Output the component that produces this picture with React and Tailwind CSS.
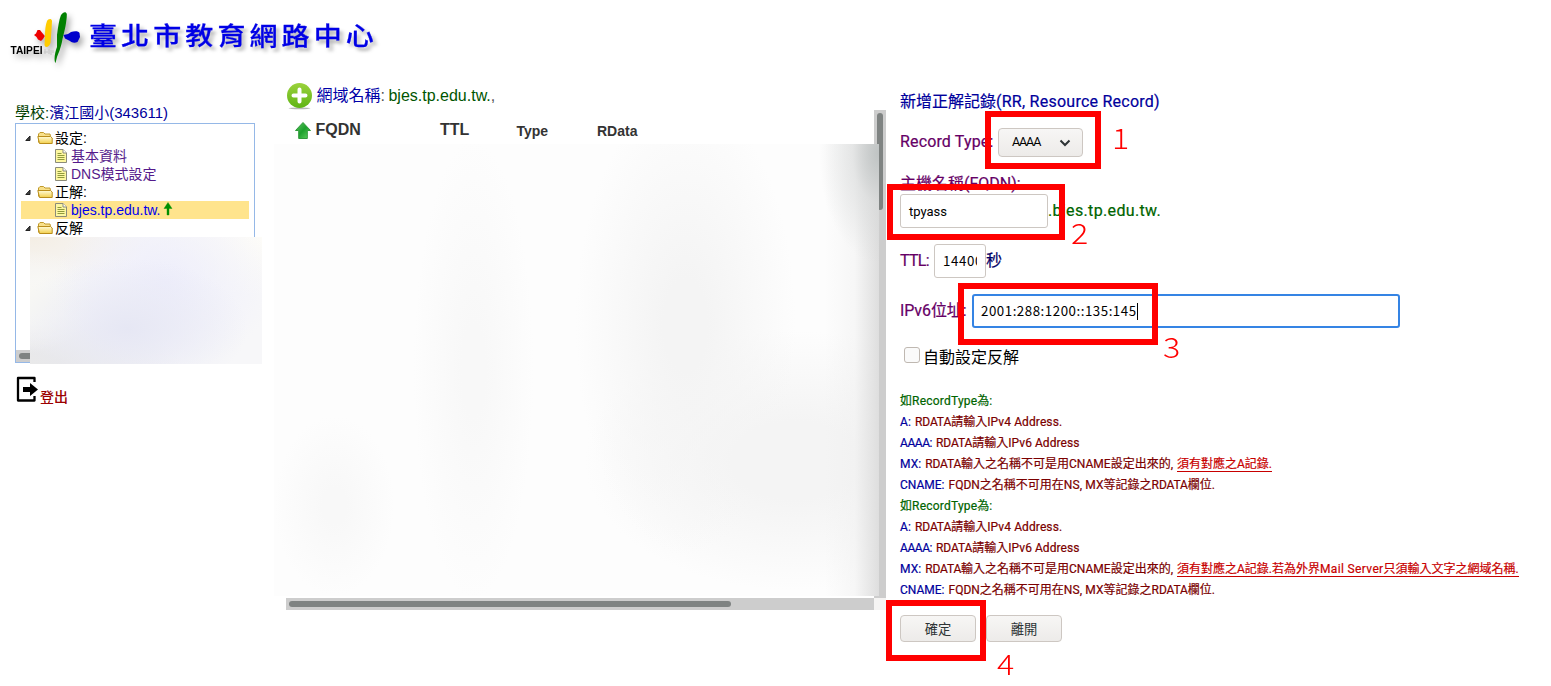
import React from "react";

const Logo = () => (
  <svg width="84" height="66" viewBox="0 0 84 66" className="shrink-0 overflow-visible drop-shadow-[3px_4px_3px_rgba(0,0,0,0.35)]">
    <path d="M34 35 L36 33.500 L37.500 30 L40 30 L41.500 32 L44.800 36 L43 39 L41 41 L38 39.500 L36.500 37 Z" fill="#ee0000" />
    <path d="M47 21 C48 19 51.500 18 52 21 L51.500 30 L50.500 43 C49 47.500 45 48 44.500 45 L45 36 C45 30 45.500 25 47 21 Z" fill="#ffcc00" />
    <path d="M61 15 C63 12 66 11 66.800 14 C67 20 65 30 62.500 39 C61 48 58.500 53 57 57 L55.500 63 C53.500 60 55 52 57 47 L57 35 C58 27 59 20 61 15 Z" fill="#008000" />
    <path d="M63.500 35 L68 34 L71 32 C74 31 79 31 79.500 33 L80 37 L77.500 42 C75 43 72 43 70 41 L65 38.500 Z" fill="#0000cc" />
    <text x="10.500" y="54" fontSize="10.500" fontWeight="700" textLength="32" lengthAdjust="spacingAndGlyphs" fontFamily="Liberation Sans, sans-serif" fill="#000">TAIPEI</text>
    <path d="M45 49v5M44 52h4M49 49v5M51 50v5M53 50v3" stroke="#c8c8c8" strokeWidth="1.200" fill="none" />
  </svg>
);

const Folder = () => (
  <svg width="16" height="14" viewBox="0 0 16 14" className="shrink-0">
    <defs>
      <linearGradient id="fold" x1="0" y1="0" x2="0" y2="1">
        <stop offset="0" stopColor="#fffbd8" />
        <stop offset="1" stopColor="#f3cf4b" />
      </linearGradient>
    </defs>
    <path d="M1.500 11.500 V3 L3 1.500 H6.500 L8 3 H13 L13.500 5.500" fill="#f8e08a" stroke="#c09a2c" />
    <path d="M2.500 12.500 L0.800 5.500 H13.500 L15.200 7 V12.500 Z" fill="url(#fold)" stroke="#b98d1b" />
  </svg>
);

const Doc = () => (
  <svg width="12" height="14" viewBox="0 0 12 14" className="shrink-0">
    <path d="M0.500 0.500 H8 L11.500 4 V13.500 H0.500 Z" fill="#fdf7a0" stroke="#8b8b7a" />
    <path d="M8 0.500 V4 H11.500" fill="#fff" stroke="#8b8b7a" />
    <path d="M2.500 4.500h4M2.500 6.500h7M2.500 8.500h7M2.500 10.500h7" stroke="#8f9a3c" />
  </svg>
);

const Group = ({ children }) => (
  <div className="flex h-[18px] items-center pl-1">
    <svg width="6" height="6" viewBox="0 0 6 6" className="mr-[6px]">
      <path d="M5 1V5.500H0.800Z" fill="#444" stroke="#222" />
    </svg>
    <Folder />
    <span className="ml-[2px] text-black">{children}</span>
  </div>
);

const Leaf = ({ children, className = "" }) => (
  <div className={"flex h-[18px] items-center pl-[34px] " + className}>
    <Doc />
    <span className="ml-1">{children}</span>
  </div>
);

const Hint = ({ label, labelClass = "", children }) => (
  <div className="h-[21px] whitespace-nowrap">
    <span className={"mr-1 text-[#00009c] " + labelClass}>{label}</span>
    <span className="text-[#7b0000]">{children}</span>
  </div>
);

const Hints = ({ children }) => (
  <>
    <div className="h-[21px] whitespace-nowrap text-[#006400]">
      如<span className="tracking-[0.22px]">RecordType</span>為:
    </div>
    <Hint label="A:" labelClass="tracking-[0.1px]">
      <span className="tracking-[-0.1px]">RDATA</span>請輸入<span className="tracking-[0.1px]">IPv4 Address.</span>
    </Hint>
    <Hint label="AAAA:" labelClass="tracking-[-0.45px]">
      <span className="tracking-[-0.1px]">RDATA</span>請輸入<span className="tracking-[0.05px]">IPv6 Address</span>
    </Hint>
    <Hint label="MX:" labelClass="tracking-[0.1px]">
      <span className="tracking-[-0.2px]">RDATA</span>輸入之名稱不可是用CNAME設定出來的,
      <span className="ml-1 inline-block h-[18px] border-b border-[#c80000] leading-[21px] text-[#c80000]">{children}</span>
    </Hint>
    <Hint label="CNAME:">
      FQDN之名稱不可用在<span className="tracking-[0.1px]">NS, MX</span>等記錄之<span className="tracking-[-0.1px]">RDATA</span>欄位.
    </Hint>
  </>
);

const Button = ({ children }) => (
  <button className="h-[27px] w-[76px] rounded-[4px] border border-[#cdc7c2] bg-linear-to-b from-[#f7f6f5] to-[#edebe9] font-['Noto_Sans_CJK_TC',sans-serif] text-[13.3px] leading-none font-normal text-[#2e3436]">
    {children}
  </button>
);

export default function App() {
  return (
    <div className="relative h-[686px] w-[1551px] overflow-hidden bg-white font-['Liberation_Sans','Noto_Sans_CJK_TC',sans-serif]">
      <header className="flex h-[80px] items-start">
        <Logo />
        <h1 className="mt-[13px] ml-[5px] origin-center scale-y-[0.9] font-['Noto_Sans_CJK_TC',sans-serif] text-[28px] leading-[42px] font-medium tracking-[4.1px] whitespace-nowrap text-[#0000e6] drop-shadow-[3px_4px_2px_rgba(0,0,0,0.3)] [-webkit-text-stroke:0.3px_#0000e6]">
          臺北市教育網路中心
        </h1>
      </header>

      <div className="flex items-start">
        <aside className="w-[259px] shrink-0 pt-[23px] pl-[15px]">
          <div className="h-[20px] text-[15px] leading-[19px] whitespace-nowrap text-[#00009c]">
            <span className="text-[#004000]">學校:</span>濱江國小(343611)
          </div>
          <div className="relative flex h-[240px] w-[240px] flex-col border border-[#95b8e7] text-[14px] leading-[18px]">
            <div className="flex-1 px-[5px] pt-[5px]">
              <Group>設定:</Group>
              <Leaf className="text-[#551a8b]">基本資料</Leaf>
              <Leaf className="text-[#551a8b]">DNS模式設定</Leaf>
              <Group>正解:</Group>
              <Leaf className="bg-[#ffe48d] text-[#0000ee]">
                <span className="flex items-center">
                  bjes.tp.edu.tw.
                  <svg width="10" height="14" viewBox="0 0 10 14" className="mt-[-2px] ml-[2px]">
                    <path d="M5 0.500 L9 6.500 H6 V13 H4 V6.500 H1 Z" fill="#009000" stroke="#009000" strokeWidth="0.400" />
                  </svg>
                </span>
              </Leaf>
              <Group>反解</Group>
            </div>
            <div className="h-3 bg-[#cdcdcd] px-[3px] py-[3px]">
              <div className="h-[6px] w-[100px] rounded-full bg-[#7f8382]" />
            </div>
            <div className="absolute top-[113px] left-[14px] h-[127px] w-[232px] bg-[#f7f7f9] bg-[radial-gradient(ellipse_120px_70px_at_42%_72%,#e6e7f4,transparent),radial-gradient(ellipse_110px_90px_at_58%_35%,#eeeefb,transparent),radial-gradient(ellipse_70px_50px_at_0%_50%,#f8f8f4_20%,transparent),radial-gradient(ellipse_120px_50px_at_0%_0%,#f4eee4,transparent),radial-gradient(ellipse_150px_50px_at_0%_100%,#e9e9e9_20%,transparent),radial-gradient(ellipse_120px_60px_at_100%_0%,#fdfcf8,transparent)]" />
          </div>
          <div className="flex h-[43px] items-end pb-px">
            <svg width="24" height="28" viewBox="0 0 24 28" className="mb-[2px]">
              <path d="M19.500 7V3H3V25.500H19.500V21" fill="none" stroke="#000" strokeWidth="2.300" strokeLinejoin="round" />
              <path d="M8 12H15V8L23 14.500L15 21V17H8Z" fill="#000" />
            </svg>
            <span className="ml-px text-[14px] leading-[16px] font-medium text-[#9c0000]">登出</span>
          </div>
        </aside>

        <main className="w-[626px] shrink-0 pl-[27px]">
          <div className="flex h-[30px] items-center pt-[2px] text-[16px] whitespace-nowrap text-[#555]">
            <svg width="28" height="28" viewBox="0 0 28 28" className="mr-[3px] ml-[-0.500px] shrink-0">
              <defs>
                <linearGradient id="plus" x1="0" y1="0" x2="0" y2="1">
                  <stop offset="0" stopColor="#9bd23c" />
                  <stop offset="1" stopColor="#5fb415" />
                </linearGradient>
              </defs>
              <ellipse cx="13.500" cy="26.300" rx="11" ry="0.900" fill="#999" opacity="0.700" />
              <circle cx="13.500" cy="13.500" r="12.500" fill="url(#plus)" />
              <path d="M13.500 7.500V19.500M7.500 13.500H19.500" stroke="#fff" strokeWidth="4" strokeLinecap="round" />
            </svg>
            <span className="text-[#0000a8]">網域名稱</span>:<span className="ml-[3.5px] text-[#005500]">bjes.tp.edu.tw.</span>,
          </div>
          <div className="relative grid h-[500px] w-[600px] grid-cols-[588px_12px] grid-rows-[488px_12px]">
            <div className="flex items-start pt-[9px] pl-[8px] font-bold text-[#333]">
              <svg width="18" height="19" viewBox="0 0 18 19" className="mt-[2px] mr-[3.5px] shrink-0">
                <defs>
                  <linearGradient id="up" x1="0" y1="0" x2="1" y2="1">
                    <stop offset="0" stopColor="#63c763" />
                    <stop offset="0.500" stopColor="#1ca02c" />
                    <stop offset="1" stopColor="#66d466" />
                  </linearGradient>
                </defs>
                <path d="M9 1.500L16.500 9.500H13.300V17.500H4.700V9.500H1.500Z" fill="url(#up)" stroke="#2f9a3a" />
              </svg>
              <span className="w-[124.500px] text-[16px] leading-[22px]">FQDN</span>
              <span className="w-[76.500px] text-[16px] leading-[22px]">TTL</span>
              <span className="w-[80.500px] text-[14px] leading-[25px]">Type</span>
              <span className="text-[14px] leading-[25px]">RData</span>
            </div>
            <div className="bg-[#cdcdcd] p-[3px]">
              <div className="h-[97px] w-[6px] rounded-full bg-[#7f8382]" />
            </div>
            <div className="bg-[#cdcdcd] p-[3px]">
              <div className="h-[6px] w-[442px] rounded-full bg-[#7f8382]" />
            </div>
            <div className="bg-[#f5f4f3]" />
            <div className="absolute top-[34px] left-[-12px] h-[452px] w-[605px] bg-[#fdfdfd] bg-[radial-gradient(ellipse_60px_110px_at_100%_2%,#bfc3c3,#d3d5d580_45%,transparent),linear-gradient(270deg,#dedede,#f0f0f080_4%,transparent_9%),radial-gradient(ellipse_110px_230px_at_68%_40%,#f4f4f4_20%,transparent),radial-gradient(ellipse_210px_130px_at_86%_70%,#f4f4f4_30%,transparent),radial-gradient(ellipse_60px_230px_at_33%_50%,#f8f8f8_20%,transparent),radial-gradient(ellipse_60px_90px_at_10%_80%,#f8f8f8_20%,transparent)]" />
          </div>
        </main>

        <section className="w-[651px] shrink-0 pt-[10px] pl-[15px] font-['Roboto','Noto_Sans_CJK_TC',sans-serif] text-[16px] font-normal text-[#660066] [-webkit-text-stroke:0.2px]">
          <h2 className="h-[24px] leading-[24px] font-normal whitespace-nowrap text-[#00009c]">
            新增正解記錄<span className="tracking-[0.25px]">(RR, Resource Record)</span>
          </h2>
          <div className="mt-[14px] flex h-[29px] items-center">
            <span className="mt-[-1px] w-[98px] tracking-[0.15px] whitespace-nowrap">Record Type:</span>
            <div className="flex h-[29px] w-[85px] items-center justify-between rounded-[4px] border border-[#cdc7c2] bg-linear-to-b from-[#f7f6f5] to-[#edebe9] pr-[11px] pl-[13px] text-[12.500px] font-normal tracking-[-1.1px] text-black [-webkit-text-stroke:0px]">
              AAAA
              <svg width="12" height="8" viewBox="0 0 12 8">
                <path d="M1.500 1.500L6 6L10.500 1.500" fill="none" stroke="#2e3436" strokeWidth="2" />
              </svg>
            </div>
          </div>
          <div className="mt-[17px] h-[20px] leading-[20px]">主機名稱(FQDN):</div>
          <div className="flex h-[34px] items-center">
            <div className="h-[34px] w-[148px] rounded-[3px] border border-[#cdc7c2] bg-white px-2 text-[13px] leading-[33px] font-normal text-black [-webkit-text-stroke:0px]">tpyass</div>
            <span className="leading-[18px] tracking-[0.35px] whitespace-nowrap text-[#006400]">.bjes.tp.edu.tw.</span>
          </div>
          <div className="mt-[16px] flex h-[34px] items-center">
            <span className="w-[34px] tracking-[-0.7px]">TTL:</span>
            <div className="h-[34px] w-[52px] rounded-[3px] border border-[#cdc7c2] bg-white px-2 font-['Noto_Sans_CJK_TC',sans-serif] text-[13.3px] leading-[32px] font-normal tracking-[0.6px] text-black [-webkit-text-stroke:0px]">
              <div className="h-full overflow-hidden">14400</div>
            </div>
            <span className="text-[#000066]">秒</span>
          </div>
          <div className="mt-[16px] flex h-[34px] items-center">
            <span className="w-[72px] tracking-[-0.1px] whitespace-nowrap">IPv6位址:</span>
            <div className="flex h-[34px] w-[428px] items-center rounded-[3px] border-2 border-[#3584e4] bg-white px-[7px] font-['Noto_Sans_CJK_TC',sans-serif] text-[13.3px] font-normal tracking-[0.53px] text-black [-webkit-text-stroke:0px]">
              <span className="leading-[28px]">2001:288:1200::135:145</span>
              <span className="h-[17px] w-px bg-black" />
            </div>
          </div>
          <div className="mt-[18px] flex h-[24px] items-center font-normal text-black [-webkit-text-stroke:0px]">
            <span className="mt-[-6px] mr-[3px] ml-1 h-4 w-4 rounded-[3px] border border-[#bfb8b1] bg-[#fafafa]" />
            自動設定反解
          </div>
          <div className="mt-[21px] h-[210px] text-[12px] leading-[21px]">
            <Hints>須有對應之A記錄.</Hints>
            <Hints>
              須有對應之A記錄.若為外界<span className="tracking-[0.35px]">Mail Server</span>只須輸入文字之網域名稱.
            </Hints>
          </div>
          <div className="mt-[14px] flex gap-[10px] [-webkit-text-stroke:0px]">
            <Button>確定</Button>
            <Button>離開</Button>
          </div>
        </section>
      </div>

      <div className="pointer-events-none font-['Noto_Sans_CJK_TC',sans-serif] text-[28px] leading-[20px] font-light text-[#ff0000]">
        <div className="absolute top-[111px] left-[985px] h-[58px] w-[116px] border-6 border-[#ff0000]" />
        <div className="absolute top-[184px] left-[887px] h-[56px] w-[178px] border-6 border-[#ff0000]" />
        <div className="absolute top-[283px] left-[958px] h-[62px] w-[200px] border-6 border-[#ff0000]" />
        <div className="absolute top-[600px] left-[886px] h-[61px] w-[100px] border-6 border-[#ff0000]" />
        <span className="absolute top-[127px] left-[1112px] origin-left scale-x-[1.15]">1</span>
        <span className="absolute top-[222px] left-[1071px] origin-left scale-x-[1.15]">2</span>
        <span className="absolute top-[336px] left-[1163px] origin-left scale-x-[1.15]">3</span>
        <span className="absolute top-[653px] left-[997px] origin-left scale-x-[1.15]">4</span>
      </div>
    </div>
  );
}
